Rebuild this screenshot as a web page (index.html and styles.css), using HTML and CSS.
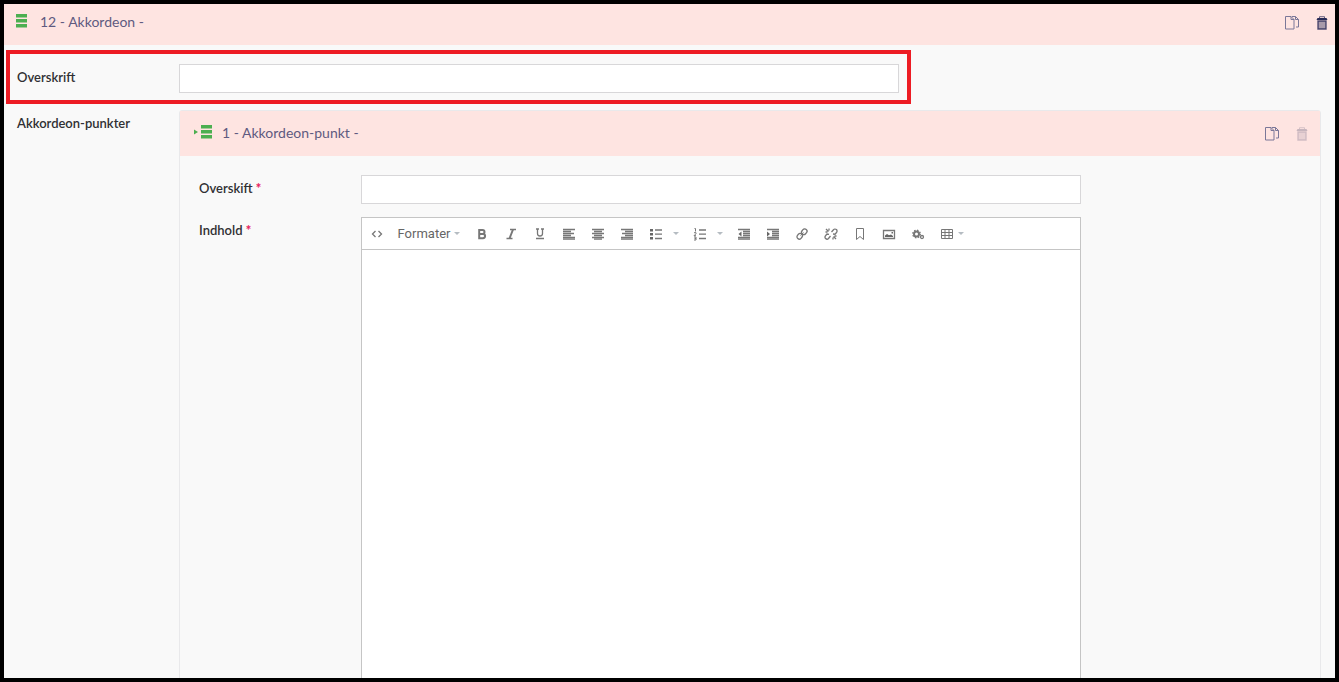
FILE: index.html
```html
<!DOCTYPE html>
<html lang="da">
<head>
    <meta charset="UTF-8">
    <meta name="viewport" content="width=device-width, initial-scale=1.0">
    <title>Akkordeon</title>
    <link rel="stylesheet" href="styles.css">
</head>
<body>
    <svg class="defs" width="0" height="0" aria-hidden="true">
        <symbol id="copy" viewBox="0 0 16 16">
            <path d="M1.500 1.500h5.500l3 3v9.500h-8.500zM7 1.500v3h3" fill="none" stroke="currentColor"/>
            <path d="M8 1.500h3.500l3 3V12H12M11.500 1.500v3h3" fill="none" stroke="currentColor"/>
        </symbol>
        <symbol id="trash" viewBox="0 0 16 16">
            <path d="M3.500 3h9l1 2h-11z" fill="currentColor"/>
            <path d="M5.500 3V1.700h5V3" fill="none" stroke="currentColor" stroke-opacity=".7"/>
            <path d="M4 6h8v8H4z" fill="currentColor" fill-opacity=".4" stroke="currentColor" stroke-opacity=".8" stroke-width="1.400"/>
        </symbol>
    </svg>
    <main class="frame">
        <header class="item-head">
            <svg class="list-icon" viewBox="0 0 12 14"><path d="M0 0h11v3.500H0zM0 5h11v3.500H0zM0 10h11v3.500H0z"/></svg>
            <span class="title">12 - Akkordeon -</span>
            <button class="tool" aria-label="Kopier"><svg><use href="#copy"/></svg></button>
            <button class="tool dark" aria-label="Slet"><svg><use href="#trash"/></svg></button>
        </header>
        <div class="row marked">
            <label for="heading">Overskrift</label>
            <input type="text" id="heading">
        </div>
        <div class="row points">
            <span class="label">Akkordeon-punkter</span>
            <section class="item">
                <header class="item-head">
                    <svg class="list-icon nested" viewBox="0 0 18 14"><path d="M0 4.500l4 2.500-4 2.500zM7 0h11v3.500H7zM7 5h11v3.500H7zM7 10h11v3.500H7z"/></svg>
                    <span class="title">1 - Akkordeon-punkt -</span>
                    <button class="tool" aria-label="Kopier"><svg><use href="#copy"/></svg></button>
                    <button class="tool" aria-label="Slet" disabled><svg><use href="#trash"/></svg></button>
                </header>
                <div class="item-body">
                    <div class="row">
                        <label for="point-heading">Overskift <b>*</b></label>
                        <input type="text" id="point-heading">
                    </div>
                    <div class="row">
                        <label for="content">Indhold <b>*</b></label>
                        <div class="editor">
                            <div class="toolbar">
                                <button aria-label="Kildekode"><svg viewBox="0 0 14 14"><path class="line" d="M5.500 4L2.500 7l3 3M8.500 4l3 3-3 3"/></svg></button>
                                <button class="formats">Formater<i class="caret"></i></button>
                                <button aria-label="Fed"><svg viewBox="0 0 14 14"><path class="line thick" d="M4.200 3h3.300a1.800 1.800 0 0 1 0 4H4.200zM4.200 7h3.800a2 2 0 0 1 0 4.200H4.200z"/></svg></button>
                                <button aria-label="Kursiv"><svg viewBox="0 0 14 14"><path class="line" d="M6 2.500h6M2.500 11.500h6"/><path class="line thick" d="M9 2.500l-3.500 9"/></svg></button>
                                <button aria-label="Understreget"><svg viewBox="0 0 14 14"><path class="line" d="M4.500 2v4.500a2.500 2.500 0 0 0 5 0V2M3 2h3M8 2h3M3 11.500h8"/></svg></button>
                                <button aria-label="Venstrestil"><svg viewBox="0 0 14 14"><path class="bars" d="M1 2.500h12M1 4.500h8M1 6.500h11M1 8.500h8M1 10.500h12M1 12.200h12"/></svg></button>
                                <button aria-label="Centrer"><svg viewBox="0 0 14 14"><path class="bars" d="M1 2.500h12M3 4.500h8M1 6.500h12M3 8.500h8M1 10.500h12M3 12.200h8"/></svg></button>
                                <button aria-label="Højrestil"><svg viewBox="0 0 14 14"><path class="bars" d="M1 2.500h12M5 4.500h8M2 6.500h11M5 8.500h8M1 10.500h12M1 12.200h12"/></svg></button>
                                <button class="split" aria-label="Punktliste"><svg viewBox="0 0 14 14"><path class="line" d="M6 3h7M6 7.200h7M6 11.500h7"/><path d="M1 2h3v2.500H1zM1 6h3v2.500H1zM1 10h3v2.500H1z"/></svg><i class="caret"></i></button>
                                <button class="split" aria-label="Nummerliste"><svg viewBox="0 0 14 14"><path class="line" d="M6 3h7M6 7.200h7M6 11.500h7"/><path class="line thin" d="M1.500 1.500h1v3M1 5.700h2v1l-2 2h2M1 10h2v3H1M1.500 11.500H3"/></svg><i class="caret"></i></button>
                                <button aria-label="Formindsk indrykning"><svg viewBox="0 0 14 14"><path class="bars" d="M1 2.500h12M6 4.500h7M6 6.500h7M6 8.500h7M1 10.500h12M1 12.200h12"/><path d="M4.500 4.500v5L1.500 7z"/></svg></button>
                                <button aria-label="Forøg indrykning"><svg viewBox="0 0 14 14"><path class="bars" d="M1 2.500h12M6 4.500h7M6 6.500h7M6 8.500h7M1 10.500h12M1 12.200h12"/><path d="M1 4.500v5L4 7z"/></svg></button>
                                <button aria-label="Link"><svg viewBox="0 0 14 14"><rect class="line" x="7" y="1.700" width="4.600" height="6" rx="2.300" transform="rotate(40 9.300 4.700)"/><rect class="line" x="2.400" y="6.300" width="4.600" height="6" rx="2.300" transform="rotate(40 4.700 9.300)"/><path class="line thin" d="M5.500 8.500l3-3"/></svg></button>
                                <button aria-label="Fjern link"><svg viewBox="0 0 14 14"><path class="line" d="M7.500 5l2-2.300a2 2 0 0 1 3 2.800L11 7.200 9 7M6.500 9l-2 2.500a2 2 0 0 1-3-2.800L3 7l2 .3M2 2l2.500 2.500M5 1.500v2M1.500 5h2M12 12L9.500 9.500M9 10.500v2M10.500 9h2"/></svg></button>
                                <button aria-label="Bogmærke"><svg viewBox="0 0 14 14"><path class="line thin" d="M3.500 1.500h7v11L7 9.500l-3.500 3z"/></svg></button>
                                <button aria-label="Billede"><svg viewBox="0 0 14 14"><path class="line" d="M1.500 3.500h11v8h-11z"/><path d="M3 10V8.500l2-1.500 2 1.200 2-.7 2 1.500v1zM9.500 5h1.500v1.500H9.500z"/></svg></button>
                                <button aria-label="Makro"><svg viewBox="0 0 14 14"><circle class="gear" cx="5.500" cy="7" r="2.500"/><circle class="teeth" cx="5.500" cy="7" r="3.800"/><circle class="line" cx="11" cy="10" r="1.500"/></svg></button>
                                <button class="split table" aria-label="Tabel"><svg viewBox="0 0 14 14"><path class="line thin" d="M1.500 2.500h11v9h-11zM1.500 5.500h11M1.500 8.500h11M5 2.500v9M9 2.500v9"/></svg><i class="caret"></i></button>
                            </div>
                            <textarea id="content"></textarea>
                        </div>
                    </div>
                </div>
            </section>
        </div>
    </main>
</body>
</html>
```

FILE: styles.css
```css
* {
    margin: 0;
    padding: 0;
    box-sizing: border-box;
}
body {
    font-family: Lato, "Liberation Sans", sans-serif;
    font-size: 13px;
    line-height: 20px;
    color: #303033;
}
button {
    border: 0;
    background: none;
    cursor: pointer;
}
.defs {
    position: absolute;
}
.frame {
    height: 100vh;
    overflow: hidden;
    border: 4px solid #000;
    background: #f9f9f9;
}
.item-head {
    display: flex;
    align-items: center;
    height: 41px;
    padding: 0 5px 4px 12px;
    background: #fee4e1;
    color: #5e5a80;
    font-size: 14px;
}
.list-icon {
    width: 12px;
    height: 14px;
    margin: 0 12px 4px 0;
    fill: #4caf50;
}
.list-icon.nested {
    width: 18px;
    margin-right: 10px;
}
.title {
    flex: 1;
    padding-bottom: 2px;
}
.tool {
    width: 16px;
    height: 16px;
    margin-left: 14px;
    color: #7a7798;
}
.tool svg {
    display: block;
    width: 16px;
    height: 16px;
}
.tool.dark {
    color: #292b57;
}
.tool:disabled {
    color: #292b57;
    opacity: 0.25;
}
.row {
    display: flex;
    align-items: flex-start;
}
.row > label,
.row > .label {
    flex: 0 0 162px;
    padding-top: 3px;
    font-weight: 600;
}
label b {
    color: #e7225e;
}
input[type=text] {
    flex: 1;
    min-width: 0;
    max-width: 720px;
    height: 29px;
    padding: 0 8px;
    border: 1px solid #d8d7d9;
    background: #fff;
    font: inherit;
}
.marked {
    max-width: 905px;
    margin: 5px 2px 0;
    padding: 10px 8px 7px 7px;
    border: 4px solid #ed1c24;
}
.points {
    margin-top: 6px;
    padding: 0 14px 0 13px;
}
.item {
    flex: 1;
    min-width: 0;
    border: 1px solid #e9e9eb;
    border-radius: 3px;
}
.item .item-head {
    height: 45px;
    padding: 0 10px 0 14px;
}
.item-body {
    display: grid;
    gap: 13px;
    padding: 19px;
}
.editor {
    flex: 1;
    min-width: 0;
    max-width: 720px;
    border: 1px solid #c5c5c5;
    background: #fff;
}
.toolbar {
    display: flex;
    height: 32px;
    border-bottom: 1px solid #c5c5c5;
}
.toolbar button {
    display: flex;
    align-items: center;
    justify-content: center;
    width: 29px;
    color: #666;
}
.toolbar svg {
    width: 14px;
    height: 14px;
    fill: #666;
}
.toolbar .formats {
    width: 76px;
    font: 13px Roboto, "Liberation Sans", sans-serif;
}
.toolbar .split {
    width: 44px;
    justify-content: flex-start;
    padding-left: 8px;
}
.caret {
    margin-left: 10px;
    border: 3px solid transparent;
    border-top-color: #b5bcc2;
    border-bottom: 0;
}
.formats .caret,
.table .caret {
    margin-left: 4px;
}
.toolbar .line,
.toolbar .bars,
.toolbar .gear,
.toolbar .teeth {
    fill: none;
    stroke: #777;
    stroke-width: 1.3;
}
.toolbar .thick {
    stroke-width: 2;
}
.toolbar .thin {
    stroke-width: 1;
}
.toolbar .gear {
    stroke-width: 2;
}
.toolbar .teeth {
    stroke-dasharray: 1.5 1.5;
}
textarea {
    display: block;
    width: 100%;
    height: 500px;
    padding: 8px;
    border: 0;
    resize: none;
    font: inherit;
}
```
